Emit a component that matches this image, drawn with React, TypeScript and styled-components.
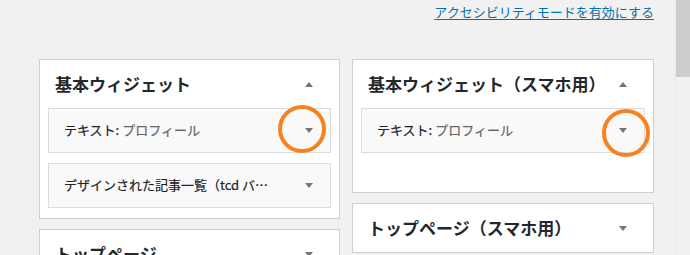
import * as React from 'react';
import styled, { createGlobalStyle } from 'styled-components';

const TEXT_COLOR = '#23282d';
const ARROW_COLOR = '#72777c';
const BORDER_COLOR = '#ccd0d4';
const FONT = '"Noto Sans CJK JP", "Noto Sans", sans-serif';

const GlobalStyle = createGlobalStyle`
  html, body {
    margin: 0;
    padding: 0;
    background: #f1f1f1;
    font-family: ${FONT};
    color: ${TEXT_COLOR};
  }
  * {
    box-sizing: border-box;
  }
`;

const StyledPage = styled.div`
  display: flex;
  width: 690px;
  height: 255px;
  overflow: hidden;
`;

const StyledMain = styled.div`
  flex: 1;
  padding: 0 21px 0 39px;
`;

const StyledTopBar = styled.div`
  display: flex;
  justify-content: flex-end;
  height: 59px;
  padding-top: 2px;
`;

const StyledA11yLink = styled.a`
  font-size: 13px;
  line-height: 19px;
  color: #0073aa;
  text-decoration: underline;
  text-underline-offset: 2px;
  cursor: pointer;
`;

const StyledColumns = styled.div`
  display: grid;
  grid-template-columns: 301px 302px;
  column-gap: 12px;
  align-items: start;
`;

const StyledColumn = styled.div`
  display: flex;
  flex-direction: column;
  gap: 10px;
`;

const StyledPanel = styled.div`
  background: #fff;
  border: 1px solid ${BORDER_COLOR};
`;

const StyledPanelHeader = styled.div`
  display: flex;
  align-items: center;
  justify-content: space-between;
  height: 48px;
  padding: 0 26px 0 15px;
`;

const StyledPanelTitle = styled.h2`
  margin: 0;
  font-size: 17px;
  font-weight: 700;
  line-height: 1.4;
  color: ${TEXT_COLOR};
`;

const StyledItemList = styled.div<{ $minHeight?: number }>`
  display: flex;
  flex-direction: column;
  gap: 10px;
  padding: 0 8px 10px;
  min-height: ${(p) => (p.$minHeight ? `${p.$minHeight}px` : 'auto')};
`;

const StyledItem = styled.div`
  position: relative;
  display: flex;
  align-items: center;
  justify-content: space-between;
  height: 45px;
  padding: 0 17px 0 15px;
  background: #f9f9f9;
  border: 1px solid #dcdcde;
`;

const StyledItemTitle = styled.h3`
  margin: 0;
  font-size: 13px;
  font-weight: 400;
  line-height: 1.6;
  color: #1d2327;
  white-space: nowrap;
  overflow: hidden;
  text-overflow: ellipsis;
  max-width: 207px;
  -webkit-text-stroke: 0.2px #1d2327;
`;

const StyledInWidgetTitle = styled.span`
  color: #666;
  -webkit-text-stroke: 0.2px #666;
`;

const StyledToggle = styled.span<{ $up?: boolean }>`
  display: block;
  width: 0;
  height: 0;
  border-left: 4px solid transparent;
  border-right: 4px solid transparent;
  ${(p) =>
    p.$up
      ? `border-bottom: 5px solid ${ARROW_COLOR};`
      : `border-top: 5px solid ${ARROW_COLOR};`}
`;

const StyledCircle = styled.span<{ $left: number; $top: number }>`
  position: absolute;
  left: ${(p) => p.$left}px;
  top: ${(p) => p.$top}px;
  width: 48px;
  height: 48px;
  border: 4px solid #f7821f;
  border-radius: 50%;
  pointer-events: none;
`;

const StyledScrollbar = styled.div`
  width: 15px;
  flex-shrink: 0;
  background: #f1f1f1;
  border-left: 1px solid #e9e9e9;
`;

const StyledScrollThumb = styled.div`
  height: 77px;
  background: #cdcdcd;
`;

interface WidgetItem {
  label: string;
  sub?: string;
  circle?: { left: number; top: number };
}

interface WidgetArea {
  title: string;
  open: boolean;
  items?: WidgetItem[];
  minHeight?: number;
}

const LEFT_AREAS: WidgetArea[] = [
  {
    title: '基本ウィジェット',
    open: true,
    items: [
      { label: 'テキスト: ', sub: 'プロフィール', circle: { left: 229, top: -4 } },
      { label: 'デザインされた記事一覧（tcd バナー記事一覧）' },
    ],
  },
  { title: 'トップページ', open: false },
];

const RIGHT_AREAS: WidgetArea[] = [
  {
    title: '基本ウィジェット（スマホ用）',
    open: true,
    minHeight: 84,
    items: [{ label: 'テキスト: ', sub: 'プロフィール', circle: { left: 240, top: 0 } }],
  },
  { title: 'トップページ（スマホ用）', open: false },
];

const Panel: React.FC<{ area: WidgetArea }> = ({ area }) => (
  <StyledPanel>
    <StyledPanelHeader>
      <StyledPanelTitle>{area.title}</StyledPanelTitle>
      <StyledToggle $up={area.open} />
    </StyledPanelHeader>
    {area.open && area.items && (
      <StyledItemList $minHeight={area.minHeight}>
        {area.items.map((item, i) => (
          <StyledItem key={i}>
            <StyledItemTitle>
              {item.label}
              {item.sub && <StyledInWidgetTitle>{item.sub}</StyledInWidgetTitle>}
            </StyledItemTitle>
            <StyledToggle />
            {item.circle && <StyledCircle $left={item.circle.left} $top={item.circle.top} />}
          </StyledItem>
        ))}
      </StyledItemList>
    )}
  </StyledPanel>
);

const App: React.FC = () => (
  <>
    <GlobalStyle />
    <StyledPage>
      <StyledMain>
        <StyledTopBar>
          <StyledA11yLink>アクセシビリティモードを有効にする</StyledA11yLink>
        </StyledTopBar>
        <StyledColumns>
          <StyledColumn>
            {LEFT_AREAS.map((a) => (
              <Panel key={a.title} area={a} />
            ))}
          </StyledColumn>
          <StyledColumn>
            {RIGHT_AREAS.map((a) => (
              <Panel key={a.title} area={a} />
            ))}
          </StyledColumn>
        </StyledColumns>
      </StyledMain>
      <StyledScrollbar>
        <StyledScrollThumb />
      </StyledScrollbar>
    </StyledPage>
  </>
);

export default App;
